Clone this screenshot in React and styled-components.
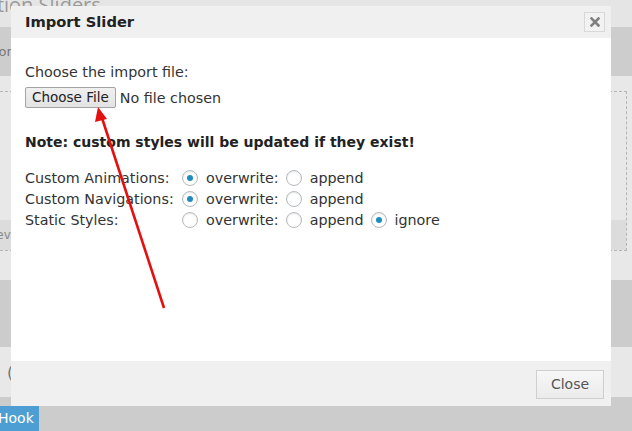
import React from "react";
import styled, { createGlobalStyle } from "styled-components";

const GlobalStyle = createGlobalStyle`
  html, body {
    margin: 0;
    padding: 0;
    background: #e5e5e5;
  }
  body {
    font-family: "DejaVu Sans", Verdana, sans-serif;
  }
`;

const Page = styled.div`
  position: relative;
  width: 632px;
  height: 431px;
  overflow: hidden;
  background: #e5e5e5;
  display: flex;
  flex-direction: column;
`;

const PageTitle = styled.div`
  height: 27px;
  flex: none;
  font-family: "Open Sans", sans-serif;
  font-size: 20px;
  line-height: 10px;
  color: #9a9a9a;
  margin-left: -66px;
  white-space: nowrap;
`;

const Band = styled.div`
  flex: none;
  height: ${(p) => p.h}px;
  background: ${(p) => p.bg};
  color: #777;
  font-size: 13px;
  display: flex;
  align-items: ${(p) => p.align || "center"};
  white-space: nowrap;
  overflow: hidden;
`;

const DashedBox = styled.div`
  margin: 15px 5px 0 -20px;
  height: 158px;
  flex: 1;
  border: 1px dashed #b5b5b5;
  display: flex;
  flex-direction: column;
  justify-content: flex-end;
`;

const DashedFoot = styled.div`
  height: 30px;
  background: #dcdcdc;
  display: flex;
  align-items: center;
  padding-left: 12px;
  font-size: 12px;
  color: #888;
`;

const BottomBar = styled.div`
  flex: 1;
  background: #cccccc;
  display: flex;
  align-items: flex-end;
`;

const HookButton = styled.div`
  height: 25px;
  width: 39px;
  background: #4d9fd3;
  color: #fff;
  font-size: 14px;
  line-height: 25px;
  text-indent: -2px;
  overflow: hidden;
  white-space: nowrap;
`;

const Modal = styled.div`
  position: absolute;
  left: 11px;
  top: 6px;
  width: 600px;
  height: 400px;
  background: #fff;
  display: flex;
  flex-direction: column;
`;

const ModalHeader = styled.div`
  height: 32px;
  flex: none;
  background: #f0f0f0;
  display: flex;
  align-items: center;
  justify-content: space-between;
  padding: 0 6px 0 14px;
`;

const ModalTitle = styled.div`
  font-weight: bold;
  font-size: 14.7px;
  color: #222;
  margin-top: -1px;
`;

const XButton = styled.div`
  width: 19px;
  height: 18px;
  border: 1px solid #d8d8d8;
  background: #f2f2f2;
  display: flex;
  align-items: center;
  justify-content: center;
`;

const ModalBody = styled.div`
  flex: 1;
  padding: 26px 14px 0;
  color: #333;
  font-size: 14.3px;
`;

const Line = styled.div`
  line-height: 16px;
`;

const FileRow = styled.div`
  margin-top: 7px;
  display: flex;
  align-items: center;
  gap: 4px;
  height: 21px;
`;

const FileButton = styled.div`
  height: 19px;
  padding: 0 6px;
  border: 1px solid #a3a3a3;
  border-radius: 2px;
  background: linear-gradient(#f0f0f0, #e3e3e3);
  color: #222;
  font-size: 13.5px;
  line-height: 19px;
`;

const Note = styled.div`
  margin-top: 26px;
  font-weight: bold;
  font-size: 14px;
  line-height: 16px;
  color: #222;
`;

const Options = styled.div`
  margin-top: 17px;
  display: flex;
  flex-direction: column;
`;

const OptionRow = styled.div`
  display: flex;
  align-items: center;
  height: 21px;
`;

const OptionLabel = styled.div`
  width: 157px;
  flex: none;
  white-space: nowrap;
`;

const Choice = styled.label`
  display: flex;
  align-items: center;
  margin-right: 7px;
`;

const Radio = styled.span`
  width: 14px;
  height: 14px;
  border: 1px solid #b4b9be;
  border-radius: 50%;
  background: #fff;
  box-shadow: inset 0 1px 2px rgba(0, 0, 0, 0.1);
  display: flex;
  align-items: center;
  justify-content: center;
  margin-right: 8px;
  &::after {
    content: "";
    width: 6px;
    height: 6px;
    border-radius: 50%;
    background: ${(p) => (p.checked ? "#1e8cbe" : "transparent")};
  }
`;

const ModalFooter = styled.div`
  height: 45px;
  flex: none;
  background: #f0f0f0;
  display: flex;
  align-items: center;
  justify-content: flex-end;
  padding-right: 7px;
`;

const CloseButton = styled.div`
  width: 66px;
  height: 27px;
  border: 1px solid #cfcfcf;
  background: linear-gradient(#f7f7f7, #ebebeb);
  color: #555;
  font-size: 14px;
  display: flex;
  align-items: center;
  justify-content: center;
  margin-top: 1px;
`;

const ArrowLayer = styled.svg`
  position: absolute;
  left: 0;
  top: 0;
  pointer-events: none;
`;

const rows = [
  { label: "Custom Animations:", value: "overwrite", ignore: false },
  { label: "Custom Navigations:", value: "overwrite", ignore: false },
  { label: "Static Styles:", value: "ignore", ignore: true },
];

export default function App() {
  return (
    <>
      <GlobalStyle />
      <Page>
        <PageTitle>Revolution Sliders</PageTitle>
        <Band h={49} bg="#cdcdcd">
          <span style={{ marginLeft: -6 }}>for</span>
        </Band>
        <Band h={204} bg="#e8e8e8" align="flex-start">
          <DashedBox>
            <DashedFoot>lev</DashedFoot>
          </DashedBox>
        </Band>
        <Band h={67} bg="#cccccc" />
        <Band h={50} bg="#e8e8e8">
          <span style={{ marginLeft: 7, fontSize: 16 }}>(</span>
        </Band>
        <BottomBar>
          <HookButton>Hook</HookButton>
        </BottomBar>

        <Modal>
          <ModalHeader>
            <ModalTitle>Import Slider</ModalTitle>
            <XButton>
              <svg width="10" height="10" viewBox="0 0 10 10">
                <path d="M1.5 1.5 L8.5 8.5 M8.5 1.5 L1.5 8.5" stroke="#808080" strokeWidth="2.6" strokeLinecap="square" />
              </svg>
            </XButton>
          </ModalHeader>
          <ModalBody>
            <Line>Choose the import file:</Line>
            <FileRow>
              <FileButton>Choose File</FileButton>
              <span>No file chosen</span>
            </FileRow>
            <Note>Note: custom styles will be updated if they exist!</Note>
            <Options>
              {rows.map((r) => (
                <OptionRow key={r.label}>
                  <OptionLabel>{r.label}</OptionLabel>
                  <Choice>
                    <Radio checked={r.value === "overwrite"} />
                    overwrite:
                  </Choice>
                  <Choice>
                    <Radio checked={r.value === "append"} />
                    append
                  </Choice>
                  {r.ignore && (
                    <Choice>
                      <Radio checked={r.value === "ignore"} />
                      ignore
                    </Choice>
                  )}
                </OptionRow>
              ))}
            </Options>
          </ModalBody>
          <ModalFooter>
            <CloseButton>Close</CloseButton>
          </ModalFooter>
        </Modal>

        <ArrowLayer width="632" height="431" viewBox="0 0 632 431">
          <line x1="164" y1="308" x2="102" y2="118" stroke="#e31010" strokeWidth="2.6" />
          <polygon points="98,107 95,122 107,119" fill="#e31010" />
        </ArrowLayer>
      </Page>
    </>
  );
}
